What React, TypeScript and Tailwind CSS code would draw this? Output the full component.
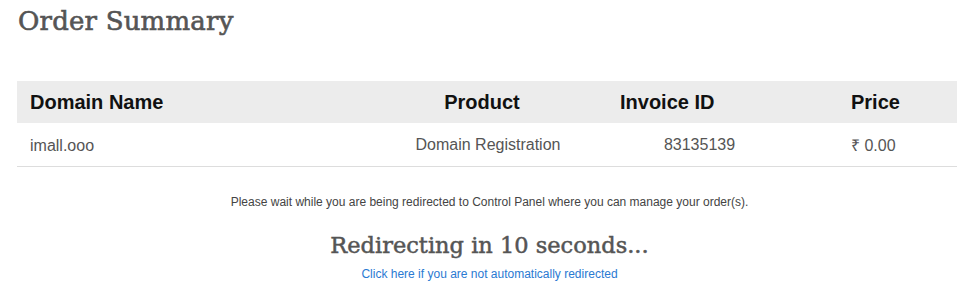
const slab = { fontFamily: '"DejaVu Serif", "Liberation Serif", serif' }

export default function App() {
  return (
    <div className="w-[979px] h-[286px] bg-white overflow-hidden" style={{ fontFamily: '"Liberation Sans", Arial, sans-serif' }}>
      <h1 className="pl-[18px] pt-[5px] text-[26px] leading-[32px] text-[#555] tracking-[0.2px] [-webkit-text-stroke:0.6px_#555]" style={slab}>
        Order Summary
      </h1>

      <div className="mx-[17px] mt-[44px] w-[940px]">
        <div className="grid grid-cols-[370px_220px_185px_165px] h-[42px] items-center bg-[#ececec] text-[20px] font-bold text-[#111]">
          <div className="pl-[13px]">Domain Name</div>
          <div className="text-center pr-[30px]">Product</div>
          <div className="pl-[13px]">Invoice ID</div>
          <div className="pl-[59px]">Price</div>
        </div>
        <div className="grid grid-cols-[370px_220px_185px_165px] h-[44px] items-center border-b border-[#ddd] text-[16px] text-[#555]">
          <div className="pl-[13px] mt-[2px]">imall.ooo</div>
          <div className="text-center pr-[18px]">Domain Registration</div>
          <div className="text-center">83135139</div>
          <div className="pl-[59px] mt-[2px]">₹ 0.00</div>
        </div>
      </div>

      <div className="flex flex-col items-center">
        <p className="mt-[28px] text-[12px] leading-[14px] text-[#444]">
          Please wait while you are being redirected to Control Panel where you can manage your order(s).
        </p>
        <p className="mt-[21px] text-[22.5px] leading-[30px] text-[#555] [-webkit-text-stroke:0.5px_#555]" style={slab}>
          Redirecting in 10 seconds...
        </p>
        <a href="#" className="mt-[7px] text-[12px] leading-[14px] text-[#2a7ad2]">
          Click here if you are not automatically redirected
        </a>
      </div>
    </div>
  )
}
